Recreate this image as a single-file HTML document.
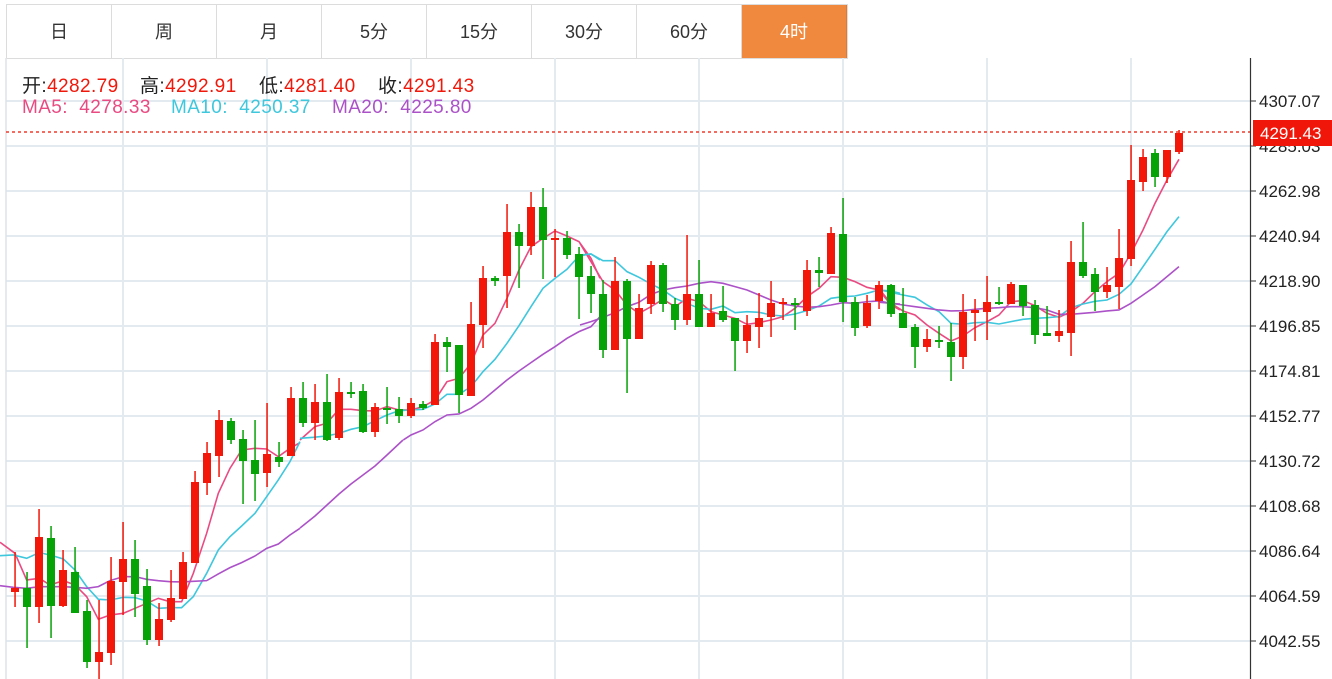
<!DOCTYPE html>
<html><head><meta charset="utf-8">
<style>
html,body{margin:0;padding:0;background:#fff;width:1332px;height:679px;overflow:hidden;font-family:"Liberation Sans","Noto Sans CJK SC",sans-serif;}
.tabs{position:absolute;left:6px;top:4px;height:53px;border:1px solid #dcdcdc;display:flex;}
.tab{width:104px;height:53px;border-right:1px solid #dcdcdc;text-align:center;line-height:54px;font-size:18px;color:#333;}
.tab.act{background:#f0883e;color:#fff;border-right:1px solid #e07a30;}
.hd{position:absolute;font-size:19px;white-space:nowrap;letter-spacing:0.4px;}
</style></head><body>
<div class="tabs">
<div class="tab">日</div><div class="tab">周</div><div class="tab">月</div><div class="tab">5分</div><div class="tab">15分</div><div class="tab">30分</div><div class="tab">60分</div><div class="tab act">4时</div>
</div>
<svg id="c" width="1332" height="679" style="position:absolute;left:0;top:0" xmlns="http://www.w3.org/2000/svg">
<g id="grid" stroke="#e3eaf0" stroke-width="2"></g>
<line x1="6" y1="58" x2="6" y2="679" stroke="#dde3e8" stroke-width="1.5"/>
<g id="ma" fill="none" stroke-width="1.6">
<g transform="translate(0,370) scale(0.3333)">
<polyline stroke="#ea4a82" vector-effect="non-scaling-stroke" points="0,517 45,550 80,630 118,625 150,645 190,632 225,645 260,680 295,748 330,735 370,730 405,715 440,700 475,685 510,695 545,695 580,610 620,490 655,370 690,295 725,240 765,235 800,237 835,260 870,235 900,218"/>
<polyline stroke="#3ec7dd" vector-effect="non-scaling-stroke" points="0,557 40,555 80,565 118,548 150,555 190,567 225,600 260,650 295,688 330,690 370,682 405,683 440,693 475,715 510,713 545,713 580,680 620,610 655,540 690,500 725,468 765,430 800,380 835,330 870,275 900,215"/>
<polyline stroke="#ac52c8" vector-effect="non-scaling-stroke" points="0,647 40,652 80,655 118,650 150,650 190,650 225,652 260,655 295,650 330,632 370,620 405,620 440,628 475,632 510,635 545,636 580,634 620,632 655,612 690,593 725,578 765,558 800,535 835,522 870,495 900,475"/>
</g>
<polyline stroke="#ac52c8" points="300,528 315,516 327,505 339,494 351,484 363,475 375,466 387,455 403,440"/>
<g transform="translate(280,180) scale(0.3333)">
<polyline stroke="#ea4a82" vector-effect="non-scaling-stroke" points="60,780 105,740 140,730 177,688 213,688 250,692 285,693 321,680 357,690 393,690 429,680 465,660 501,605 537,595 573,550 609,465 645,430 681,355 717,270 753,200 789,175 825,153 861,168 897,185 933,235 960,295"/>
<polyline stroke="#3ec7dd" vector-effect="non-scaling-stroke" points="60,775 100,772 140,768 177,760 213,748 250,740 285,722 321,705 357,692 393,690 429,688 465,672 501,643 537,643 573,620 609,575 645,538 681,490 717,437 753,380 789,325 825,295 861,268 897,228 933,222 960,240"/>
<polyline stroke="#ac52c8" vector-effect="non-scaling-stroke" points="370,780 393,765 429,750 465,725 501,705 537,702 573,685 609,660 645,630 681,600 717,573 753,548 789,523 825,500 861,475 897,455 933,440 960,410"/>
</g>
<g transform="translate(580,190) scale(0.3333)">
<polyline stroke="#ea4a82" vector-effect="non-scaling-stroke" points="0,160 33,215 69,275 105,300 141,345 177,370 213,350 249,328 285,350 321,325 357,335 393,365 429,375 465,385 501,403 537,398 573,390 609,380 645,355 681,320 717,295 753,260 789,262 825,275 861,292 897,300 933,345 960,360"/>
<polyline stroke="#3ec7dd" vector-effect="non-scaling-stroke" points="0,195 33,192 69,212 105,212 141,245 177,262 213,282 249,300 285,325 321,340 357,355 393,358 429,348 465,368 501,365 537,367 573,375 609,378 645,372 681,362 717,348 753,325 789,320 825,318 861,310 897,300 933,303 960,310"/>
<polyline stroke="#ac52c8" vector-effect="non-scaling-stroke" points="0,405 33,395 69,382 105,368 141,350 177,337 213,313 249,300 285,293 321,288 357,280 393,275 429,280 465,290 501,300 537,315 573,330 609,342 645,348 681,352 717,350 753,345 789,338 825,340 861,335 897,333 933,340 960,342"/>
</g>
<g transform="translate(880,130) scale(0.3333)">
<polyline stroke="#ea4a82" vector-effect="non-scaling-stroke" points="0,480 33,520 69,543 105,555 141,585 177,610 213,633 249,618 285,593 321,575 357,555 393,515 429,512 465,527 501,550 537,562 573,545 609,520 645,485 681,455 717,430 753,370 789,300 825,220 861,150 897,88"/>
<polyline stroke="#3ec7dd" vector-effect="non-scaling-stroke" points="0,480 33,487 69,495 105,502 141,525 177,545 213,580 249,583 285,578 321,577 357,582 393,575 429,568 465,565 501,563 537,560 573,533 609,522 645,514 681,510 717,493 753,462 789,410 825,358 861,305 897,260"/>
<polyline stroke="#ac52c8" vector-effect="non-scaling-stroke" points="0,517 33,520 69,525 105,530 141,535 177,540 213,543 249,542 285,538 321,535 357,533 393,530 429,530 465,533 501,540 537,553 573,553 609,550 645,547 681,543 717,540 753,520 789,495 825,470 861,440 897,410"/>
</g>
</g>
<g id="cd"></g>
<line x1="6" y1="132" x2="1250" y2="132" stroke="#f03a2a" stroke-width="1.5" stroke-dasharray="3,3"/>
<line x1="1250.5" y1="58" x2="1250.5" y2="679" stroke="#333" stroke-width="1.2"/>
<g id="ax" font-family="Liberation Sans, sans-serif" font-size="17" fill="#222"></g>
<rect x="1253" y="120" width="79" height="26" fill="#f0170a"/>
<text x="1260" y="139" font-family="Liberation Sans, sans-serif" font-size="17" fill="#fff">4291.43</text>
</svg>
<div class="hd" style="left:22px;top:71px;color:#222">开:<span style="color:#f0180a">4282.79</span></div>
<div class="hd" style="left:140px;top:71px;color:#222">高:<span style="color:#f0180a">4292.91</span></div>
<div class="hd" style="left:259px;top:71px;color:#222">低:<span style="color:#f0180a">4281.40</span></div>
<div class="hd" style="left:378px;top:71px;color:#222">收:<span style="color:#f0180a">4291.43</span></div>
<div class="hd" style="left:22px;top:97px;color:#ea4a82">MA5:&nbsp; 4278.33</div>
<div class="hd" style="left:171px;top:97px;color:#3ec7dd">MA10:&nbsp; 4250.37</div>
<div class="hd" style="left:332px;top:97px;color:#ac52c8">MA20:&nbsp; 4225.80</div>
<script>
var NS="http://www.w3.org/2000/svg";
function el(p,t,a){var e=document.createElementNS(NS,t);for(var k in a)e.setAttribute(k,a[k]);p.appendChild(e);return e;}
var g=document.getElementById('grid');
var labels=["4307.07","4285.03","4262.98","4240.94","4218.90","4196.85","4174.81","4152.77","4130.72","4108.68","4086.64","4064.59","4042.55"];
var ax=document.getElementById('ax');
for(var i=0;i<13;i++){var y=101+i*45;
el(g,'line',{x1:6,y1:y,x2:1250,y2:y});
el(ax,'line',{x1:1250,y1:y,x2:1256,y2:y,stroke:'#333','stroke-width':1});
var t=el(ax,'text',{x:1259,y:y+6});t.textContent=labels[i];}
[123,267,411,555,699,843,987,1131].forEach(function(x){el(g,'line',{x1:x,y1:58,x2:x,y2:679});});
var C=[
[15,'r',588,592,552,607],[27,'g',588,607,572,648],[39,'r',537,607,509,623],[51,'g',538,606,526,638],[63,'r',570,606,550,607],[75,'g',572,613,547,613],[87,'g',611,662,600,668],[99,'r',652,662,600,679],[111,'r',581,653,557,665],[123,'r',559,582,522,615],[135,'g',559,594,540,617],[147,'g',586,640,569,645],[159,'r',619,640,603,646],[171,'r',598,620,570,622],[183,'r',562,599,552,599],[195,'r',482,563,471,563],[207,'r',453,483,442,495],[219,'r',420,456,410,477],[231,'g',421,440,418,444],[243,'g',439,461,430,504],[255,'g',460,474,420,501],[267,'r',454,473,403,487],[279,'g',457,462,442,467],[291,'r',398,456,387,456],
[303,'g',398,423,382,427],[315,'r',402,423,384,440],[327,'g',402,440,374,441],[339,'r',392,438,378,440],[351,'g',392,394,382,398],[363,'g',391,432,384,433],[375,'r',407,432,403,437],[387,'g',408,410,387,424],[399,'g',409,416,397,423],[411,'r',403,416,398,418],[423,'g',404,408,401,410],[435,'r',342,405,334,405],[447,'g',342,347,337,372],[459,'g',345,395,345,413],[471,'r',324,396,302,396],[483,'r',278,325,266,348],[495,'g',278,281,276,286],[507,'r',232,276,204,308],[519,'g',232,246,224,288],[531,'r',207,246,192,255],[543,'g',207,240,188,279],[555,'r',238,240,229,277],[567,'g',238,255,231,259],[579,'g',254,277,247,319],[591,'g',276,294,266,313],
[603,'g',294,350,280,358],[615,'r',281,350,257,350],[627,'g',281,339,279,393],[639,'r',308,339,294,339],[651,'r',265,304,261,314],[663,'g',265,304,263,312],[675,'g',304,320,298,330],[687,'r',294,320,235,325],[699,'g',294,327,260,327],[711,'r',313,327,294,327],[723,'g',311,320,286,322],[735,'g',318,341,318,371],[747,'r',325,341,315,353],[759,'r',318,327,293,348],[771,'r',303,317,281,337],[783,'r',302,304,298,320],[795,'g',303,305,298,330],[807,'r',270,311,260,316],[819,'g',270,273,257,287],[831,'r',233,274,227,274],[843,'g',234,302,198,322],[855,'g',302,328,297,336],[867,'r',303,326,295,328],[879,'r',285,301,281,309],[891,'g',285,314,284,317],
[903,'g',313,328,288,328],[915,'g',327,347,324,368],[927,'r',339,347,329,352],[939,'g',340,341,326,348],[951,'g',342,357,323,381],[963,'r',312,357,294,369],[975,'r',310,313,299,341],[987,'r',302,312,276,340],[999,'g',302,304,287,305],[1011,'r',284,304,282,304],[1023,'g',285,306,285,316],[1035,'g',305,335,300,344],[1047,'g',333,336,306,336],[1059,'r',331,336,310,342],[1071,'r',262,333,241,356],[1083,'g',262,276,222,278],[1095,'g',274,292,268,311],[1107,'r',285,292,267,298],[1119,'r',258,287,229,309],[1131,'r',180,259,145,266],[1143,'r',157,182,149,191],[1155,'g',153,177,149,187],[1167,'r',150,177,150,183],[1179,'r',133,152,130,154]];
var cd=document.getElementById('cd');
C.forEach(function(c){var col=c[1]=='r'?'#f21708':'#06a306';
el(cd,'rect',{x:c[0]-0.7,y:c[4],width:1.5,height:Math.max(1,c[5]-c[4]),fill:col});
el(cd,'rect',{x:c[0]-4,y:c[2],width:8,height:Math.max(2,c[3]-c[2]),fill:col});});
</script>
</body></html>
